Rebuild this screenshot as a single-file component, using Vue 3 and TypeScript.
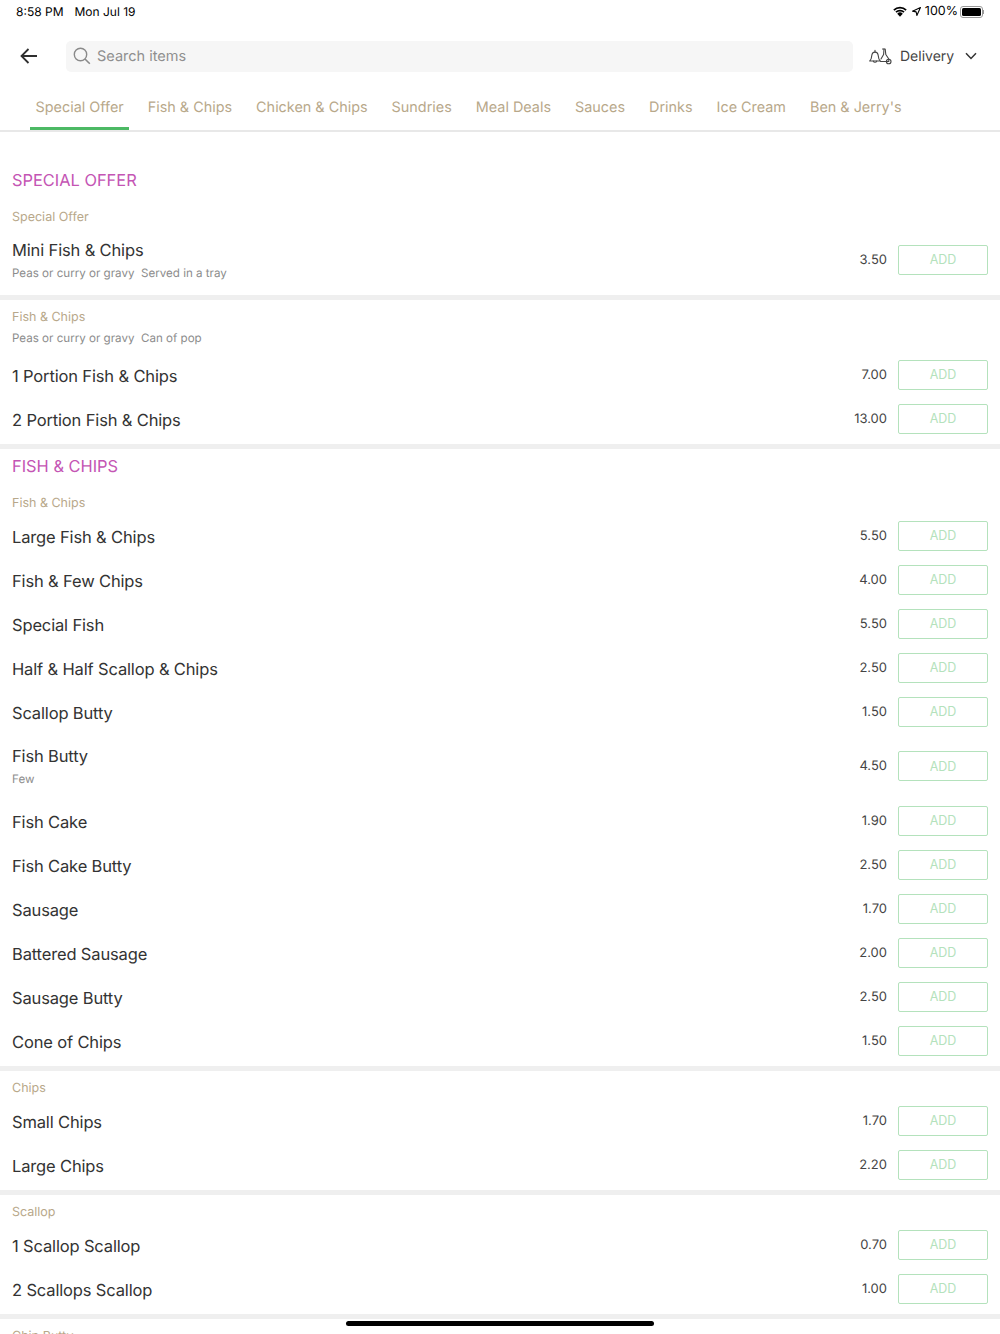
<script setup lang="ts">
interface Item { name: string; price: string; desc?: string }
interface Group { heading?: string; sub: string; subDesc?: string; items: Item[] }

const tabs = ['Special Offer', 'Fish & Chips', 'Chicken & Chips', 'Sundries', 'Meal Deals', 'Sauces', 'Drinks', 'Ice Cream', "Ben & Jerry's"]

const groups: Group[] = [
  { heading: 'SPECIAL OFFER', sub: 'Special Offer', items: [
    { name: 'Mini Fish & Chips', price: '3.50', desc: 'Peas or curry or gravy\u00a0\u00a0Served in a tray' },
  ] },
  { sub: 'Fish & Chips', subDesc: 'Peas or curry or gravy\u00a0\u00a0Can of pop', items: [
    { name: '1 Portion Fish & Chips', price: '7.00' },
    { name: '2 Portion Fish & Chips', price: '13.00' },
  ] },
  { heading: 'FISH & CHIPS', sub: 'Fish & Chips', items: [
    { name: 'Large Fish & Chips', price: '5.50' },
    { name: 'Fish & Few Chips', price: '4.00' },
    { name: 'Special Fish', price: '5.50' },
    { name: 'Half & Half Scallop & Chips', price: '2.50' },
    { name: 'Scallop Butty', price: '1.50' },
    { name: 'Fish Butty', price: '4.50', desc: 'Few' },
    { name: 'Fish Cake', price: '1.90' },
    { name: 'Fish Cake Butty', price: '2.50' },
    { name: 'Sausage', price: '1.70' },
    { name: 'Battered Sausage', price: '2.00' },
    { name: 'Sausage Butty', price: '2.50' },
    { name: 'Cone of Chips', price: '1.50' },
  ] },
  { sub: 'Chips', items: [
    { name: 'Small Chips', price: '1.70' },
    { name: 'Large Chips', price: '2.20' },
  ] },
  { sub: 'Scallop', items: [
    { name: '1 Scallop Scallop', price: '0.70' },
    { name: '2 Scallops Scallop', price: '1.00' },
  ] },
  { sub: 'Chip Butty', items: [] },
]
</script>

<template>
  <div class="page">
    <div class="status">
      <span class="time">8:58 PM</span>
      <span class="date">Mon Jul 19</span>
      <span class="status-right">
        <svg width="14" height="11" viewBox="0 0 16 12"><path d="M1 4.400a10 10 0 0 1 14 0M3.400 6.800a6.600 6.600 0 0 1 9.200 0" fill="none" stroke="#000" stroke-width="2"/><path d="M8 12 4.800 8.600a4.500 4.500 0 0 1 6.400 0z" fill="#000"/></svg>
        <svg class="loc" width="9" height="9" viewBox="0 0 10 10"><path d="M9.400.6 5.400 9.400 4.600 5.400.6 4.600z" fill="none" stroke="#000" stroke-width="1.200" stroke-linejoin="round"/></svg>
        <span class="pct">100%</span>
        <span class="battery"><span class="battery-fill"></span></span>
        <span class="battery-tip"></span>
      </span>
    </div>

    <div class="header">
      <svg class="back" width="18" height="16" viewBox="0 0 18 16"><path d="M17 8H1.500M8.500 1 1.500 8l7 7" fill="none" stroke="#2f2f2f" stroke-width="1.800"/></svg>
      <div class="search">
        <svg width="18" height="18" viewBox="0 0 18 18"><circle cx="7.500" cy="7.500" r="6.200" fill="none" stroke="#8a8a8a" stroke-width="1.400"/><path d="M12 12l4.800 4.800" stroke="#8a8a8a" stroke-width="1.600" fill="none"/></svg>
        <span>Search items</span>
      </div>
      <div class="delivery">
        <svg width="23" height="17" viewBox="0 0 23 17" fill="none" stroke="#444" stroke-width="1.100" stroke-linejoin="round" stroke-linecap="round">
          <path d="M.7 13c1.300-.9 1.800-2.300 2-5 .2-2.300 1.400-3.900 3.300-3.900s3.100 1.600 3.300 3.900c.2 2.700.7 4.100 2 5z"/>
          <path d="M6 4V2.200M4.300 13.100a1.800 1.800 0 0 0 3.400 0"/>
          <path d="M13.500 1h2.700l.6 5.500 3 4.500v2.500h-8.300"/>
          <path d="M15 1l-.4 5.500-2.600 4.500"/>
          <circle cx="19.700" cy="13.500" r="2.300"/>
        </svg>
        <span>Delivery</span>
        <svg class="chev" width="12" height="8" viewBox="0 0 12 8"><path d="M1 1.200 6 6.400l5-5.200" fill="none" stroke="#333" stroke-width="1.500"/></svg>
      </div>
    </div>

    <nav class="tabs">
      <span v-for="(t, i) in tabs" :key="t" class="tab" :class="{ active: i === 0 }">{{ t }}</span>
    </nav>

    <main class="menu">
      <section v-for="g in groups" :key="g.sub + g.heading" class="group" :class="{ first: g.heading === 'SPECIAL OFFER' }">
        <h2 v-if="g.heading" class="heading">{{ g.heading }}</h2>
        <div class="sub">{{ g.sub }}</div>
        <div v-if="g.subDesc" class="sub-desc">{{ g.subDesc }}</div>
        <div v-for="it in g.items" :key="it.name" class="row" :class="{ tall: it.desc }">
          <div class="info">
            <div class="name">{{ it.name }}</div>
            <div v-if="it.desc" class="desc">{{ it.desc }}</div>
          </div>
          <span class="price">{{ it.price }}</span>
          <button class="add">ADD</button>
        </div>
      </section>
    </main>

    <div class="home"></div>
  </div>
</template>

<style scoped>
.page {
  position: relative;
  width: 1000px;
  height: 1334px;
  overflow: hidden;
  background: #fff;
  font-family: "Inter", "Liberation Sans", sans-serif;
  text-rendering: geometricPrecision;
  color: #333;
}
.status {
  height: 24px;
  box-sizing: border-box;
  display: flex;
  align-items: center;
  padding: 0 16px 1px;
  font-size: 12px;
  color: #000;
}
.date { margin-left: 11px; }
.status-right { margin-left: auto; display: flex; align-items: center; }
.loc { margin-left: 5px; }
.pct { margin-left: 4px; font-size: 12.500px; }
.battery { width: 22.500px; height: 12px; margin-left: 2px; border: 1px solid #999; border-radius: 3px; padding: 1px; box-sizing: border-box; display: block; }
.battery-fill { display: block; height: 100%; background: #000; border-radius: 1.500px; }
.battery-tip { width: 1.500px; height: 4px; background: #999; }
.header {
  height: 64px;
  display: flex;
  align-items: center;
}
.back { margin-left: 20px; flex: none; }
.search {
  width: 787px;
  height: 31px;
  margin-left: 28px;
  padding-left: 7px;
  box-sizing: border-box;
  background: #f6f6f6;
  border-radius: 5px;
  display: flex;
  align-items: center;
  gap: 6px;
  font-size: 14.500px;
  color: #8f8f8f;
}
.delivery {
  display: flex;
  align-items: center;
  margin-left: 16px;
  font-size: 14px;
  color: #444;
}
.delivery span { margin-left: 8px; }
.chev { margin-left: 11px; }
.tabs {
  height: 42px;
  padding-left: 30px;
  display: flex;
  border-bottom: 2px solid #e8e8e8;
}
.tab {
  padding: 0 5.500px;
  margin-right: 13px;
  font-size: 14.400px;
  color: #b8a88a;
  line-height: 40px;
  height: 42px;
  box-sizing: border-box;
  white-space: nowrap;
}
.tab.active { border-bottom: 3px solid #4cb964; }
.group {
  border-bottom: 5px solid #efefef;
  padding-bottom: 3px;
}
.group.first { padding-top: 30px; }
.heading {
  margin: 0;
  padding: 5.500px 12px 9px;
  font-size: 16.400px;
  font-weight: 400;
  line-height: 24px;
  color: #c455b4;
}
.sub {
  padding: 9px 12px 0;
  margin-bottom: 1px;
  font-size: 12.500px;
  line-height: 18px;
  color: #b8a88a;
}
.heading + .sub { padding-top: 8px; margin-bottom: .5px; }
.sub-desc {
  padding: 0 12px;
  margin: 3px 0 6.500px;
  font-size: 11.600px;
  line-height: 16px;
  color: #8c8c8c;
}
.row {
  height: 44px;
  padding: 0 12px;
  display: flex;
  align-items: center;
}
.row.tall { height: 65px; }
.info { flex: 1; min-width: 0; padding-top: 2px; }
.tall .info { padding-top: 4px; }
.name { font-size: 16.500px; letter-spacing: -.15px; line-height: 22px; color: #333; }
.desc { font-size: 11.600px; line-height: 24px; color: #8c8c8c; }
.price { font-size: 13px; color: #444; margin-right: 11px; }
.add {
  width: 90px;
  height: 30px;
  padding: 0;
  background: #fff;
  border: 1.500px solid #b4e2bc;
  border-radius: 2px;
  font-family: inherit;
  font-size: 12.500px;
  color: #b4e2bc;
}
.home {
  position: absolute;
  left: 346px;
  top: 1321px;
  width: 308px;
  height: 5px;
  background: #000;
  border-radius: 3px;
}
</style>
